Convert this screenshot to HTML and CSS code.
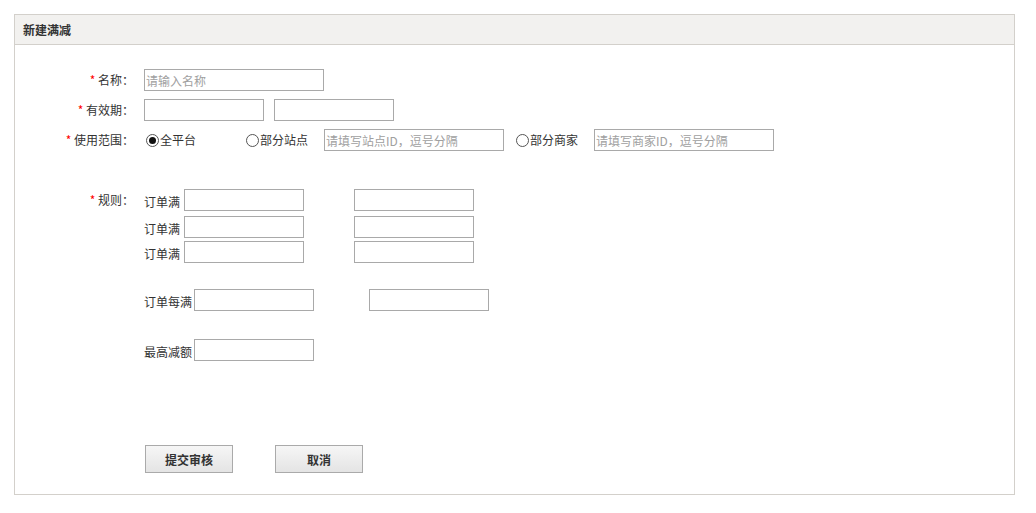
FILE: index.html
```html
<!DOCTYPE html>
<html lang="zh-CN">
<head>
<meta charset="utf-8">
<title>新建满减</title>
<link rel="stylesheet" href="styles.css">
</head>
<body>
<div class="panel">
  <div class="panel-head">新建满减</div>
  <div class="panel-body">
    <div class="row row-gap8">
      <label class="lbl"><span class="req">*</span> 名称<span class="colon">：</span></label>
      <div class="ctl"><input class="ipt w180" type="text" placeholder="请输入名称"></div>
    </div>
    <div class="row row-gap8">
      <label class="lbl"><span class="req">*</span> 有效期<span class="colon">：</span></label>
      <div class="ctl"><input class="ipt w120" type="text"><input class="ipt w120 ml10" type="text"></div>
    </div>
    <div class="row row-scope">
      <label class="lbl"><span class="req">*</span> 使用范围<span class="colon">：</span></label>
      <div class="ctl scope">
        <label class="radio-item"><input class="radio" type="radio" name="scope" checked>全平台</label>
        <label class="radio-item gap-site"><input class="radio" type="radio" name="scope">部分站点</label>
        <input class="ipt w180 ml16" type="text" placeholder="请填写站点ID，逗号分隔">
        <label class="radio-item gap-shop"><input class="radio" type="radio" name="scope">部分商家</label>
        <input class="ipt w180 ml16" type="text" placeholder="请填写商家ID，逗号分隔">
      </div>
    </div>
    <div class="row">
      <label class="lbl"><span class="req">*</span> 规则<span class="colon">：</span></label>
      <div class="ctl rules">
        <div class="rule-line"><span class="rtxt">订单满</span><input class="ipt w120" type="text"><input class="ipt w120 ml50" type="text"></div>
        <div class="rule-line mt5"><span class="rtxt">订单满</span><input class="ipt w120" type="text"><input class="ipt w120 ml50" type="text"></div>
        <div class="rule-line mt3"><span class="rtxt">订单满</span><input class="ipt w120" type="text"><input class="ipt w120 ml50" type="text"></div>
        <div class="rule-line mt26"><span class="rtxt tight">订单每满</span><input class="ipt w120" type="text"><input class="ipt w120 ml55" type="text"></div>
        <div class="rule-line mt28"><span class="rtxt tight">最高减额</span><input class="ipt w120" type="text"></div>
        <div class="btns">
          <button class="btn" type="button">提交审核</button>
          <button class="btn" type="button">取消</button>
        </div>
      </div>
    </div>
  </div>
</div>
</body>
</html>
```
FILE: styles.css
```css
* { box-sizing: border-box; }
html, body { margin: 0; padding: 0; background: #fff; }
body {
  padding: 14px;
  font-family: "Noto Sans CJK SC", "Liberation Sans", sans-serif;
  font-size: 12px;
  color: #333;
}
.panel {
  width: 1001px;
  height: 481px;
  border: 1px solid #d3d0cb;
  background: #fff;
}
.panel-head {
  height: 30px;
  line-height: 29px;
  background: #f2f1ef;
  border-bottom: 1px solid #d3d0cb;
  padding-left: 8px;
  font-weight: bold;
  color: #333;
}
.panel-body { padding-top: 24px; }
.row {
  display: grid;
  grid-template-columns: 119px 1fr;
  column-gap: 10px;
  align-items: start;
}
.row-gap8 { margin-bottom: 8px; }
.row-scope { margin-bottom: 38px; }
.lbl {
  text-align: right;
  line-height: 22px;
  height: 22px;
  color: #333;
  white-space: nowrap;
}
.colon { font-family: "Noto Sans CJK TC", "Noto Sans CJK SC", sans-serif; }
.req { color: #f00; }
.ctl { display: flex; align-items: center; }
.ipt {
  height: 22px;
  border: 1px solid #a9a9a9;
  padding: 0 1px;
  margin: 0;
  font-family: inherit;
  font-size: 12px;
  color: #333;
  background: #fff;
  outline: none;
}
.ipt::placeholder { color: #a0a0a0; }
.w120 { width: 120px; }
.w180 { width: 180px; }
.ml10 { margin-left: 10px; }
.ml16 { margin-left: 16px; }
.ml50 { margin-left: 50px; }
.ml55 { margin-left: 55px; }
.scope { align-items: center; }
.radio-item {
  display: flex;
  align-items: center;
  line-height: 22px;
  white-space: nowrap;
}
.gap-site { margin-left: 48px; }
.gap-shop { margin-left: 10px; }
.radio {
  appearance: none;
  -webkit-appearance: none;
  width: 13px;
  height: 13px;
  margin: 0 1px 0 2px;
  border: 1px solid #555;
  border-radius: 50%;
  background: #fff;
  position: relative;
  flex: none;
}
.radio:checked::after {
  content: "";
  position: absolute;
  left: 2px;
  top: 2px;
  width: 7px;
  height: 7px;
  border-radius: 50%;
  background: #111;
}
.rules { display: block; }
.rule-line { display: flex; align-items: flex-end; }
.rtxt {
  line-height: 14px;
  padding-bottom: 2px;
  margin-right: 4px;
  white-space: nowrap;
}
.rtxt.tight { margin-right: 2px; }
.mt5 { margin-top: 5px; }
.mt3 { margin-top: 3px; }
.mt26 { margin-top: 26px; }
.mt28 { margin-top: 28px; }
.btns { display: flex; margin-top: 84px; padding-left: 1px; gap: 42px; }
.btn {
  width: 88px;
  height: 28px;
  border: 1px solid #aaa;
  background: linear-gradient(#f6f6f6, #e4e4e4);
  font-family: inherit;
  font-size: 12px;
  font-weight: bold;
  color: #333;
  padding: 0;
  margin: 0;
  cursor: pointer;
}
```
